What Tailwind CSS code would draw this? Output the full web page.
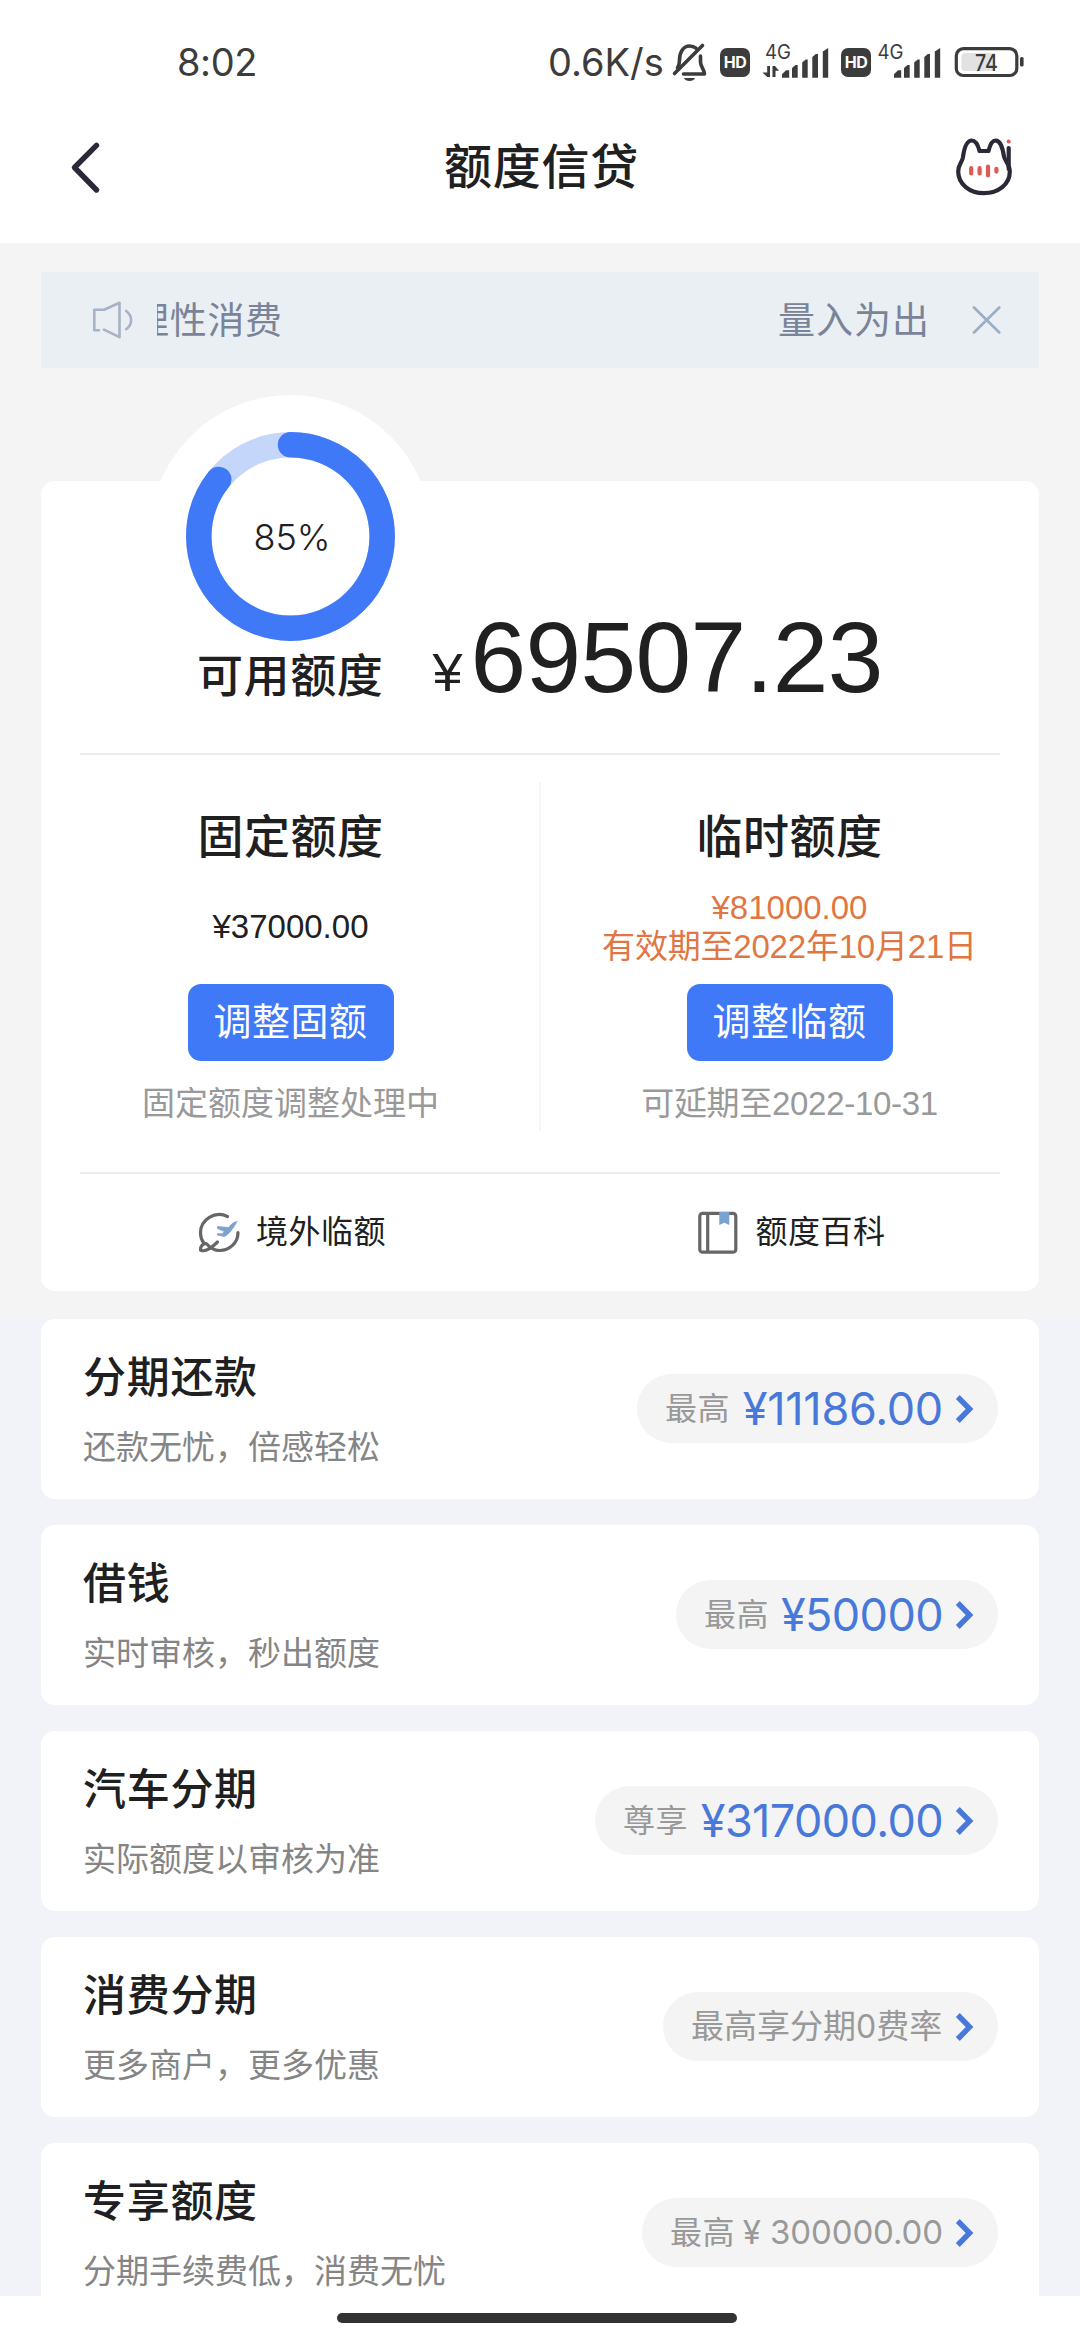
<!DOCTYPE html>
<html lang="zh-CN">
<head>
<meta charset="utf-8">
<title>额度信贷</title>
<script src="https://cdn.jsdelivr.net/npm/@tailwindcss/browser@4"></script>
</head>
<body class="w-[1080px] h-[2340px] overflow-hidden bg-[#f4f4f4] text-[#202020] font-['Liberation_Sans','Noto_Sans_CJK_SC',sans-serif]">

<!-- status bar -->
<div class="flex h-[90px] items-center bg-white pt-[34px] font-['Inter',sans-serif] text-[#3c3c3c]">
  <span class="ml-[177px] w-[90px] text-[38px] leading-none tracking-[-0.4px]">8:02</span>
  <span class="ml-[281px] w-[116px] text-[38px] leading-none">0.6K/s</span>
  <svg class="ml-[6px] h-[40px] w-[40px] shrink-0" viewBox="670 42 40 40" fill="none" stroke="#3c3c3c" stroke-width="3.6" stroke-linecap="round" stroke-linejoin="round">
    <path d="M674.500 73.5l28-28"/>
    <path d="M677.5 68c1.6-2.4 2-4.6 2-8 0-8 4-14 10-14 2.6 0 4.8.8 6.500 2.200"/>
    <path d="M700.500 56v6c0 5 4 7.500 4 12h-21"/>
    <path d="M684 78h11c-1 4-10 4-11 0z" fill="#3c3c3c" stroke="none"/>
  </svg>
  <span class="ml-[10px] flex h-[29px] w-[30px] items-center justify-center rounded-[7px] bg-[#3c3c3c] text-[16px] font-bold leading-none tracking-[-0.5px] text-white">HD</span>
  <svg class="ml-[12px] h-[40px] w-[68px] shrink-0 overflow-visible" viewBox="762 42 68 40" fill="#3c3c3c">
    <text x="765" y="58.500" font-size="20" textLength="26" lengthAdjust="spacingAndGlyphs">4G</text>
    <path d="M767.200 66h2.800v11h-2.800l-4.700-4.500h4.700zM772.500 66h2.500l4 4.700h-3.500v6.300h-3z"/>
    <path d="M782 77.700v-3.500l4-4h3.200v7.500zM792 77.700v-9.700l3.500-3h2.200v12.700zM802.200 77.700v-15.200l3.500-3h2v18.200zM812.300 77.700v-20.700l3.500-3h2.200v23.700zM822.800 77.700v-26.200l5.400-3.500v29.700z"/>
  </svg>
  <span class="ml-[11px] flex h-[29px] w-[30px] items-center justify-center rounded-[7px] bg-[#3c3c3c] text-[16px] font-bold leading-none tracking-[-0.5px] text-white">HD</span>
  <svg class="ml-[5px] h-[40px] w-[68px] shrink-0 overflow-visible" viewBox="876 42 68 40" fill="#3c3c3c">
    <text x="877.500" y="58.500" font-size="20" textLength="26" lengthAdjust="spacingAndGlyphs">4G</text>
    <path d="M894 77.700v-3.500l4-4h3.200v7.500zM904 77.700v-9.700l3.500-3h2.200v12.700zM914.200 77.700v-15.200l3.500-3h2v18.200zM924.300 77.700v-20.700l3.500-3h2.200v23.700zM934.800 77.700v-26.200l5.400-3.500v29.700z"/>
  </svg>
  <svg class="ml-[10px] h-[40px] w-[72px] shrink-0 overflow-visible" viewBox="954 42 72 40" fill="none">
    <rect x="956.300" y="48.700" width="60.500" height="26.800" rx="7" stroke="#3c3c3c" stroke-width="3.200"/>
    <path d="M965 53h30v18h-30a3.500 3.500 0 0 1-3.500-3.500v-11a3.500 3.500 0 0 1 3.500-3.500z" fill="#e2e2e2"/>
    <rect x="1020" y="57" width="3.600" height="9.500" rx="1.500" fill="#3c3c3c"/>
    <text x="975" y="70.500" font-size="23" font-weight="500" fill="#3c3c3c" textLength="23" lengthAdjust="spacingAndGlyphs">74</text>
  </svg>
</div>

<!-- title bar -->
<header class="flex h-[153px] items-center justify-between bg-white pl-[66px] pr-[60px]">
  <svg class="h-[60px] w-[68px]" viewBox="66 136 68 60" fill="none" stroke="#2b2838" stroke-width="5.400" stroke-linecap="round" stroke-linejoin="round"><path d="M96.500 144.300L74.500 166.500l22 22.500"/></svg>
  <h1 class="pr-[3px] pt-[3px] text-[48px] font-medium leading-none tracking-[0.7px]">额度信贷</h1>
  <svg class="h-[64px] w-[68px]" viewBox="952 134.500 68 64" fill="none" stroke="#2b2838" stroke-width="4.200" stroke-linecap="round" stroke-linejoin="round">
    <path d="M979.500 150.500h9c1.500-6 3.500-10.500 7-10.500 5 0 7 7 8.500 16 .8 4.500 5.800 8 5.800 15 0 13-11.500 21.700-25.800 21.700s-25.800-9.200-25.800-21.700c0-7 3.800-9 4.700-14 1.200-9 3.700-17 8.800-17 3.800 0 6.300 4.500 7.800 10.500z"/>
    <path d="M1008.700 147.500v21"/>
    <circle cx="1008.700" cy="141" r="2" fill="#dd5a55" stroke="none"/>
    <path d="M971.200 167.500v5.500M979.600 167.500v5.500M988 166v9M996.400 168.300v2.800" stroke="#dd5a55" stroke-width="4.200"/>
  </svg>
</header>

<!-- scrolling notice -->
<div class="mx-[41px] mt-[29px] flex h-[96px] items-center bg-[#eaeff4] text-[37px] leading-none text-[#7a8499]">
  <svg class="ml-[49px] h-[44px] w-[46px] shrink-0" viewBox="90 298 46 44" fill="none" stroke="#a6b3c4" stroke-width="2.600" stroke-linecap="round" stroke-linejoin="round">
    <path d="M99 330.200h-4.700v-20.400h9.900l15.300-7v34.400l-15.500-7.600"/><path d="M126.200 311c6.500 5 6.500 13.500 0 18.200"/>
  </svg>
  <div class="ml-[21px] flex w-[773px] justify-between overflow-hidden pt-[6px] pb-[4px]">
    <span class="-ml-[25px] tracking-[0.7px]">理性消费</span>
    <span class="tracking-[1px]">量入为出</span>
  </div>
  <svg class="ml-[39px] h-[34px] w-[34px] shrink-0" viewBox="969 303 34 34" fill="none" stroke="#9aafc4" stroke-width="2.700" stroke-linecap="round"><path d="M974 307.500l25.300 25M999.300 307.500l-25.300 25"/></svg>
</div>

<!-- credit summary -->
<section class="relative mx-[41px] mt-[113px] h-[810px] rounded-[14px] bg-white">
  <div class="absolute -top-[86px] left-[108px] flex size-[283px] items-center justify-center rounded-full bg-white">
    <svg class="absolute inset-0 size-[283px]" viewBox="-141.500 -141.500 283 283" fill="none" stroke-width="25.500">
      <circle r="91.700" stroke="#c4d6fa"/>
      <circle r="91.700" stroke="#3f79f7" stroke-linecap="round" pathLength="100" stroke-dasharray="85.700 100" transform="rotate(-90)"/>
    </svg>
    <span class="relative pl-[3px] pt-[1px] font-['Inter',sans-serif] text-[36px] font-light leading-none">85%</span>
  </div>
  <div class="relative flex h-[272px] items-end">
    <span class="mb-[54px] ml-[156px] text-[46px] font-medium leading-none tracking-[0.600px]">可用额度</span>
    <span class="mb-[53px] ml-[49px] w-[38px] text-[54px] leading-[56px]">¥</span>
    <span class="mb-[46px] text-[100px] leading-none tracking-[-0.600px]">69507.23</span>
  </div>
  <div class="mx-[39px] h-[1.500px] bg-[#ececec]"></div>
  <div class="relative grid h-[417.500px] grid-cols-2">
    <div class="absolute left-[498px] top-[27px] h-[349px] w-[2px] bg-[#f5f5f5]"></div>
    <div class="flex flex-col items-center pt-[59px]">
      <h2 class="text-[46px] font-medium leading-none tracking-[0.500px]">固定额度</h2>
      <div class="mt-[28px] flex h-[78px] items-center text-[33px] leading-[39px]">¥37000.00</div>
      <button class="mt-[18px] h-[77px] w-[206px] rounded-[13px] bg-[#3f79f7] text-[38px] leading-none tracking-[0.500px] text-white">调整固额</button>
      <p class="mt-[26px] text-[33px] leading-none text-[#999]">固定额度调整处理中</p>
    </div>
    <div class="flex flex-col items-center pt-[59px]">
      <h2 class="text-[46px] font-medium leading-none tracking-[0.500px]">临时额度</h2>
      <div class="mt-[28px] flex h-[78px] flex-col items-center text-[33px] leading-[39px] text-[#df7744]"><span>¥81000.00</span><span class="tracking-[-0.200px]">有效期至2022年10月21日</span></div>
      <button class="mt-[18px] h-[77px] w-[206px] rounded-[13px] bg-[#3f79f7] text-[38px] leading-none tracking-[0.500px] text-white">调整临额</button>
      <p class="mt-[26px] text-[33px] leading-none tracking-[-0.300px] text-[#999]">可延期至2022-10-31</p>
    </div>
  </div>
  <div class="mx-[39px] h-[1.500px] bg-[#ececec]"></div>
  <div class="grid h-[117.500px] grid-cols-2 text-[32px] leading-none tracking-[0.500px]">
    <div class="flex items-center justify-center pl-[2px]">
      <svg class="-ml-[7px] mb-[3px] h-[60px] w-[60px]" viewBox="0 0 60 60" fill="none" stroke="#666" stroke-width="3.200" stroke-linecap="round" stroke-linejoin="round">
        <path d="M37.500 15.500C25 9.500 10.500 18.500 10.500 32c0 4 1 7 3.300 10M48 31.500c0 10.500-8.500 18-18.500 18-6 0-9.500-2.800-13-6.800-3.500-.7-6.500 3-6 6.300 4.500 2.500 12-3 17-8"/>
        <path d="M46.800 20.800c-3 0-5 2-8.300 5.700l-11-1v2l7 3-2.500 2.500-4.500-.5v1.500l7 1.500c3.500-1.500 9-8 12.300-14.700z" fill="#7aa3cf" stroke="#7aa3cf" stroke-width=".8"/>
      </svg>
      <span class="ml-[6px]">境外临额</span>
    </div>
    <div class="flex items-center justify-center pl-[2px]">
      <svg class="-ml-[5px] mb-[3px] h-[60px] w-[60px]" viewBox="0 0 60 60" fill="none" stroke="#666" stroke-width="3.200">
        <rect x="9.800" y="12.400" width="36" height="38.800" rx="2.800"/><path d="M17.700 12.400v38.800"/>
        <path d="M29.300 11h10v13l-5-2.200-5 2.200z" fill="#7aa3cf" stroke="none"/>
      </svg>
      <span class="ml-[5px]">额度百科</span>
    </div>
  </div>
</section>

<!-- product list -->
<section class="mt-[27px] flex h-[978px] flex-col gap-[26.500px] overflow-hidden bg-[#f2f3f8] px-[41px] pt-[1px]">
  <article class="flex h-[179.500px] shrink-0 items-start justify-between rounded-[14px] bg-white pl-[42px] pr-[41px]">
    <div class="pt-[38px]"><h3 class="text-[43px] font-medium leading-none tracking-[0.700px]">分期还款</h3><p class="mt-[31px] text-[33px] leading-none text-[#858585]">还款无忧，倍感轻松</p></div>
    <div class="mt-[55px] flex h-[69px] w-[361px] items-center rounded-full bg-[#f4f4f4] pl-[28px] pr-[23px]"><span class="text-[32px] tracking-[0.500px] text-[#999]">最高</span><span class="ml-auto font-['Inter',sans-serif] text-[45px] leading-none tracking-[-0.250px] text-[#4879da]">¥11186.00</span><svg class="ml-[12px] h-[32px] w-[20px]" viewBox="0 0 20 32" fill="none" stroke="#4879da" stroke-width="5.400"><path d="M2.800 4L14.600 16 2.800 28"/></svg></div>
  </article>
  <article class="flex h-[179.500px] shrink-0 items-start justify-between rounded-[14px] bg-white pl-[42px] pr-[41px]">
    <div class="pt-[38px]"><h3 class="text-[43px] font-medium leading-none tracking-[0.700px]">借钱</h3><p class="mt-[31px] text-[33px] leading-none text-[#858585]">实时审核，秒出额度</p></div>
    <div class="mt-[55px] flex h-[69px] w-[322px] items-center rounded-full bg-[#f4f4f4] pl-[28px] pr-[23px]"><span class="text-[32px] tracking-[0.500px] text-[#999]">最高</span><span class="ml-auto font-['Inter',sans-serif] text-[45px] leading-none tracking-[-0.600px] text-[#4879da]">¥50000</span><svg class="ml-[12px] h-[32px] w-[20px]" viewBox="0 0 20 32" fill="none" stroke="#4879da" stroke-width="5.400"><path d="M2.800 4L14.600 16 2.800 28"/></svg></div>
  </article>
  <article class="flex h-[179.500px] shrink-0 items-start justify-between rounded-[14px] bg-white pl-[42px] pr-[41px]">
    <div class="pt-[38px]"><h3 class="text-[43px] font-medium leading-none tracking-[0.700px]">汽车分期</h3><p class="mt-[31px] text-[33px] leading-none text-[#858585]">实际额度以审核为准</p></div>
    <div class="mt-[55px] flex h-[69px] w-[403px] items-center rounded-full bg-[#f4f4f4] pl-[28px] pr-[23px]"><span class="text-[32px] tracking-[0.500px] text-[#999]">尊享</span><span class="ml-auto font-['Inter',sans-serif] text-[45px] leading-none tracking-[-0.600px] text-[#4879da]">¥317000.00</span><svg class="ml-[12px] h-[32px] w-[20px]" viewBox="0 0 20 32" fill="none" stroke="#4879da" stroke-width="5.400"><path d="M2.800 4L14.600 16 2.800 28"/></svg></div>
  </article>
  <article class="flex h-[179.500px] shrink-0 items-start justify-between rounded-[14px] bg-white pl-[42px] pr-[41px]">
    <div class="pt-[38px]"><h3 class="text-[43px] font-medium leading-none tracking-[0.700px]">消费分期</h3><p class="mt-[31px] text-[33px] leading-none text-[#858585]">更多商户，更多优惠</p></div>
    <div class="mt-[55px] flex h-[69px] w-[335px] items-center rounded-full bg-[#f4f4f4] pl-[28px] pr-[23px]"><span class="whitespace-nowrap text-[33px] text-[#999]">最高享分期<span class="font-['Inter',sans-serif] text-[32px]">0</span>费率</span><svg class="ml-auto h-[32px] w-[20px]" viewBox="0 0 20 32" fill="none" stroke="#4879da" stroke-width="5.400"><path d="M2.800 4L14.600 16 2.800 28"/></svg></div>
  </article>
  <article class="flex h-[179.500px] shrink-0 items-start justify-between rounded-[14px] bg-white pl-[42px] pr-[41px]">
    <div class="pt-[38px]"><h3 class="text-[43px] font-medium leading-none tracking-[0.700px]">专享额度</h3><p class="mt-[31px] text-[33px] leading-none text-[#858585]">分期手续费低，消费无忧</p></div>
    <div class="mt-[55px] flex h-[69px] w-[356px] items-center rounded-full bg-[#f4f4f4] pl-[28px] pr-[23px]"><span class="text-[32px] tracking-[0.500px] text-[#999]">最高</span><span class="ml-auto whitespace-nowrap font-['Inter',sans-serif] text-[33px] leading-none tracking-[-0.1px] text-[#999]">¥ 300000.00</span><svg class="ml-[12px] h-[32px] w-[20px]" viewBox="0 0 20 32" fill="none" stroke="#4879da" stroke-width="5.400"><path d="M2.800 4L14.600 16 2.800 28"/></svg></div>
  </article>
</section>

<!-- gesture bar -->
<div class="flex h-[44px] justify-center bg-white pt-[17px] pr-[6px]"><div class="h-[10px] w-[400px] rounded-full bg-[#333]"></div></div>
</body>
</html>
